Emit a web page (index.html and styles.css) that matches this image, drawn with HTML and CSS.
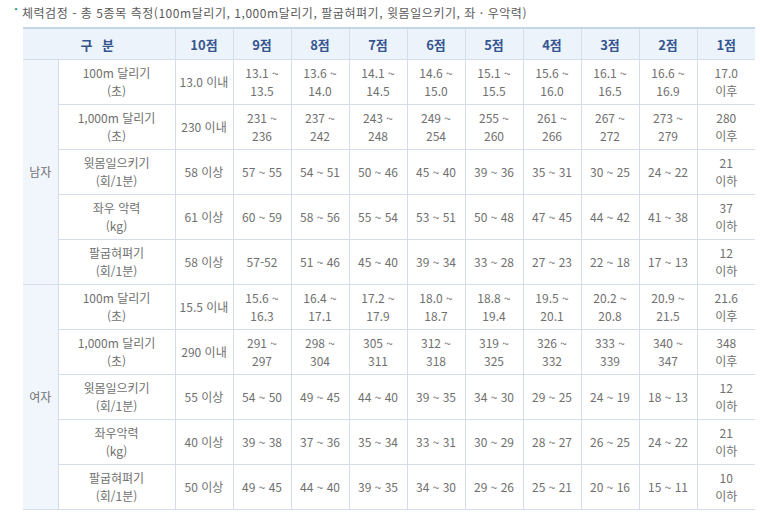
FILE: index.html
```html
<!DOCTYPE html>
<html lang="ko">
<head>
<meta charset="utf-8">
<link rel="stylesheet" href="styles.css">
</head>
<body>
<div class="page">
  <p class="title"><span class="dot">·</span>체력검정 - 총 5종목 측정(100m달리기, 1,000m달리기, 팔굽혀펴기, 윗몸일으키기, 좌 · 우악력)</p>
  <table class="score">
    <colgroup>
      <col class="c-grp"><col class="c-item">
      <col class="c-s"><col class="c-s"><col class="c-s"><col class="c-s"><col class="c-s">
      <col class="c-s"><col class="c-s"><col class="c-s"><col class="c-s"><col class="c-s">
    </colgroup>
    <thead>
      <tr>
        <th colspan="2">구 분</th>
        <th>10점</th><th>9점</th><th>8점</th><th>7점</th><th>6점</th>
        <th>5점</th><th>4점</th><th>3점</th><th>2점</th><th>1점</th>
      </tr>
    </thead>
    <tbody>
      <tr>
        <td class="grp" rowspan="5">남자</td>
        <td>100m 달리기<br>(초)</td>
        <td>13.0 이내</td>
        <td>13.1 ~<br>13.5</td><td>13.6 ~<br>14.0</td><td>14.1 ~<br>14.5</td><td>14.6 ~<br>15.0</td>
        <td>15.1 ~<br>15.5</td><td>15.6 ~<br>16.0</td><td>16.1 ~<br>16.5</td><td>16.6 ~<br>16.9</td>
        <td>17.0<br>이후</td>
      </tr>
      <tr>
        <td>1,000m 달리기<br>(초)</td>
        <td>230 이내</td>
        <td>231 ~<br>236</td><td>237 ~<br>242</td><td>243 ~<br>248</td><td>249 ~<br>254</td>
        <td>255 ~<br>260</td><td>261 ~<br>266</td><td>267 ~<br>272</td><td>273 ~<br>279</td>
        <td>280<br>이후</td>
      </tr>
      <tr>
        <td>윗몸일으키기<br>(회/1분)</td>
        <td>58 이상</td>
        <td>57 ~ 55</td><td>54 ~ 51</td><td>50 ~ 46</td><td>45 ~ 40</td>
        <td>39 ~ 36</td><td>35 ~ 31</td><td>30 ~ 25</td><td>24 ~ 22</td>
        <td>21<br>이하</td>
      </tr>
      <tr>
        <td>좌우 악력<br>(kg)</td>
        <td>61 이상</td>
        <td>60 ~ 59</td><td>58 ~ 56</td><td>55 ~ 54</td><td>53 ~ 51</td>
        <td>50 ~ 48</td><td>47 ~ 45</td><td>44 ~ 42</td><td>41 ~ 38</td>
        <td>37<br>이하</td>
      </tr>
      <tr>
        <td>팔굽혀펴기<br>(회/1분)</td>
        <td>58 이상</td>
        <td>57-52</td><td>51 ~ 46</td><td>45 ~ 40</td><td>39 ~ 34</td>
        <td>33 ~ 28</td><td>27 ~ 23</td><td>22 ~ 18</td><td>17 ~ 13</td>
        <td>12<br>이하</td>
      </tr>
      <tr>
        <td class="grp" rowspan="5">여자</td>
        <td>100m 달리기<br>(초)</td>
        <td>15.5 이내</td>
        <td>15.6 ~<br>16.3</td><td>16.4 ~<br>17.1</td><td>17.2 ~<br>17.9</td><td>18.0 ~<br>18.7</td>
        <td>18.8 ~<br>19.4</td><td>19.5 ~<br>20.1</td><td>20.2 ~<br>20.8</td><td>20.9 ~<br>21.5</td>
        <td>21.6<br>이후</td>
      </tr>
      <tr>
        <td>1,000m 달리기<br>(초)</td>
        <td>290 이내</td>
        <td>291 ~<br>297</td><td>298 ~<br>304</td><td>305 ~<br>311</td><td>312 ~<br>318</td>
        <td>319 ~<br>325</td><td>326 ~<br>332</td><td>333 ~<br>339</td><td>340 ~<br>347</td>
        <td>348<br>이후</td>
      </tr>
      <tr>
        <td>윗몸일으키기<br>(회/1분)</td>
        <td>55 이상</td>
        <td>54 ~ 50</td><td>49 ~ 45</td><td>44 ~ 40</td><td>39 ~ 35</td>
        <td>34 ~ 30</td><td>29 ~ 25</td><td>24 ~ 19</td><td>18 ~ 13</td>
        <td>12<br>이하</td>
      </tr>
      <tr>
        <td>좌우악력<br>(kg)</td>
        <td>40 이상</td>
        <td>39 ~ 38</td><td>37 ~ 36</td><td>35 ~ 34</td><td>33 ~ 31</td>
        <td>30 ~ 29</td><td>28 ~ 27</td><td>26 ~ 25</td><td>24 ~ 22</td>
        <td>21<br>이하</td>
      </tr>
      <tr>
        <td>팔굽혀펴기<br>(회/1분)</td>
        <td>50 이상</td>
        <td>49 ~ 45</td><td>44 ~ 40</td><td>39 ~ 35</td><td>34 ~ 30</td>
        <td>29 ~ 26</td><td>25 ~ 21</td><td>20 ~ 16</td><td>15 ~ 11</td>
        <td>10<br>이하</td>
      </tr>
    </tbody>
  </table>
</div>
</body>
</html>
```

FILE: styles.css
```css
html, body {
  margin: 0;
  padding: 0;
  background: #ffffff;
}

.page {
  padding: 4px 0 0 14px;
  font-family: "Noto Sans CJK KR", "DejaVu Sans", sans-serif;
  color: #707070;
  font-size: 12px;
}

.title {
  margin: 0 0 6px 0;
  height: 17px;
  line-height: 17px;
  font-size: 12px;
  color: #5a5a5a;
  letter-spacing: 0.55px;
  white-space: nowrap;
}

.dot {
  position: relative;
  top: -4px;
  color: #2f9e92;
  font-weight: bold;
  letter-spacing: 0;
  margin-right: 4px;
}

.score {
  margin-left: 9px;
  width: 732px;
  border-collapse: collapse;
  table-layout: fixed;
  border-top: 2px solid #c6d5e8;
}

.c-grp { width: 35px; }
.c-item { width: 117px; }
.c-s { width: 58px; }

.score th {
  height: 30px;
  background: #edf3fb;
  color: #35558f;
  font-weight: bold;
  font-size: 13px;
  border-bottom: 1px solid #d3deea;
  border-left: 1px solid #d3deea;
  text-align: center;
  padding: 0;
}

.score th:first-child {
  border-left: none;
  letter-spacing: 3px;
}

.score td {
  height: 44px;
  padding: 0;
  text-align: center;
  line-height: 18px;
  border-bottom: 1px solid #d3deea;
  border-left: 1px solid #d3deea;
  color: #707070;
  font-size: 12px;
  white-space: nowrap;
}

.score td.grp {
  background: #f1f6fd;
  border-left: none;
  border-bottom: 1px solid #d3deea;
}
```
